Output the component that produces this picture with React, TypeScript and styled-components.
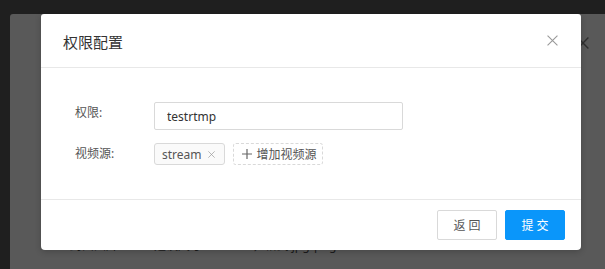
import styled, { createGlobalStyle } from "styled-components";

const Global = createGlobalStyle`
  html, body {
    margin: 0;
    padding: 0;
    background: #1f1f1f;
    overflow: hidden;
  }
  body {
    font-family: "Noto Sans", "Noto Sans CJK SC", sans-serif;
    font-size: 12px;
    color: #333;
  }
  * { box-sizing: border-box; }
`;

const Page = styled.div`
  position: relative;
  width: 605px;
  height: 269px;
  padding: 14px 0 0 10px;
`;

// the dimmed page / modal lying underneath the dialog
const Underlay = styled.div`
  position: relative;
  height: 100%;
  background: #595959;
  border-radius: 3px 0 0 0;
  padding: 222px 0 0 60px;
`;

const UnderClose = styled.div`
  position: absolute;
  top: 22px;
  right: 16px;
  width: 12px;
  height: 12px;
  color: #2e2e2e;
`;

const UnderRow = styled.div`
  display: grid;
  grid-template-columns: 84px 1fr;
  color: #1c1c1c;
  font-size: 12px;
  line-height: 20px;
`;

const Modal = styled.div`
  position: absolute;
  left: 41px;
  top: 14px;
  width: 540px;
  background: #fff;
  border-radius: 3px 3px 4px 4px;
  box-shadow: 0 2px 6px rgba(0, 0, 0, 0.2);
`;

const Header = styled.div`
  display: flex;
  align-items: center;
  justify-content: space-between;
  height: 54px;
  padding: 0 22px;
  border-bottom: 1px solid #e8e8e8;
`;

const Title = styled.div`
  font-size: 15px;
  color: #333;
  line-height: 20px;
  padding-top: 2px;
`;

const CloseBtn = styled.div`
  width: 14px;
  height: 14px;
  display: flex;
  align-items: center;
  justify-content: center;
  color: #999;
  cursor: pointer;
`;

const Body = styled.div`
  display: flex;
  flex-direction: column;
  gap: 13px;
  padding: 34px 0 34px 34px;
`;

const Row = styled.div`
  display: grid;
  grid-template-columns: 79px 1fr;
  align-items: start;
`;

const Label = styled.div`
  color: #555;
  font-size: 12px;
  line-height: 22px;
`;

const Input = styled.input`
  width: 249px;
  height: 28px;
  border: 1px solid #d9d9d9;
  border-radius: 2px;
  padding: 0 12px;
  font-family: inherit;
  font-size: 12px;
  color: #333;
  outline: none;
`;

const Tags = styled.div`
  display: flex;
  gap: 8px;
`;

const Tag = styled.div<{ $dashed?: boolean }>`
  display: flex;
  align-items: center;
  height: 22px;
  border: 1px ${(p) => (p.$dashed ? "dashed" : "solid")} #d9d9d9;
  border-radius: 3px;
  background: ${(p) => (p.$dashed ? "#fff" : "#fafafa")};
  color: #555;
  font-size: 12px;
  gap: ${(p) => (p.$dashed ? "5px" : "6px")};
  padding: ${(p) => (p.$dashed ? "0 5px 0 8px" : "0 9px 0 7px")};
`;

const TagClose = styled.span`
  display: flex;
  color: #999;
`;

const Footer = styled.div`
  display: flex;
  justify-content: flex-end;
  gap: 8px;
  padding: 10px 16px 10px;
  border-top: 1px solid #e8e8e8;
`;

const Button = styled.button<{ $primary?: boolean }>`
  width: 60px;
  height: 30px;
  border: 1px solid ${(p) => (p.$primary ? "#0a96fa" : "#d9d9d9")};
  background: ${(p) => (p.$primary ? "#0a96fa" : "#fff")};
  color: ${(p) => (p.$primary ? "#fff" : "#555")};
  border-radius: 2px;
  font-family: inherit;
  font-size: 12px;
  padding: 0;
  cursor: pointer;
`;

const Cross = ({ size, width = 1 }: { size: number; width?: number }) => (
  <svg width={size} height={size} viewBox="0 0 10 10" fill="none">
    <path d="M0.5 0.5 L9.5 9.5 M9.5 0.5 L0.5 9.5" stroke="currentColor" strokeWidth={width} />
  </svg>
);

const Plus = () => (
  <svg width="10" height="10" viewBox="0 0 10 10" fill="none">
    <path d="M5 0 V10 M0 5 H10" stroke="#666" strokeWidth="1.2" />
  </svg>
);

export default function App() {
  return (
    <>
      <Global />
      <Page>
        <Underlay>
          <UnderClose>
            <Cross size={12} width={1.2} />
          </UnderClose>
          <UnderRow>
            <span>封面图片</span>
            <span>建议尺寸 640x360，格式 jpg/png</span>
          </UnderRow>
        </Underlay>

        <Modal>
          <Header>
            <Title>权限配置</Title>
            <CloseBtn>
              <Cross size={11} />
            </CloseBtn>
          </Header>
          <Body>
            <Row>
              <Label>权限:</Label>
              <Input defaultValue="testrtmp" />
            </Row>
            <Row>
              <Label>视频源:</Label>
              <Tags>
                <Tag>
                  stream
                  <TagClose>
                    <Cross size={7} />
                  </TagClose>
                </Tag>
                <Tag $dashed>
                  <Plus />
                  增加视频源
                </Tag>
              </Tags>
            </Row>
          </Body>
          <Footer>
            <Button>返 回</Button>
            <Button $primary>提 交</Button>
          </Footer>
        </Modal>
      </Page>
    </>
  );
}
